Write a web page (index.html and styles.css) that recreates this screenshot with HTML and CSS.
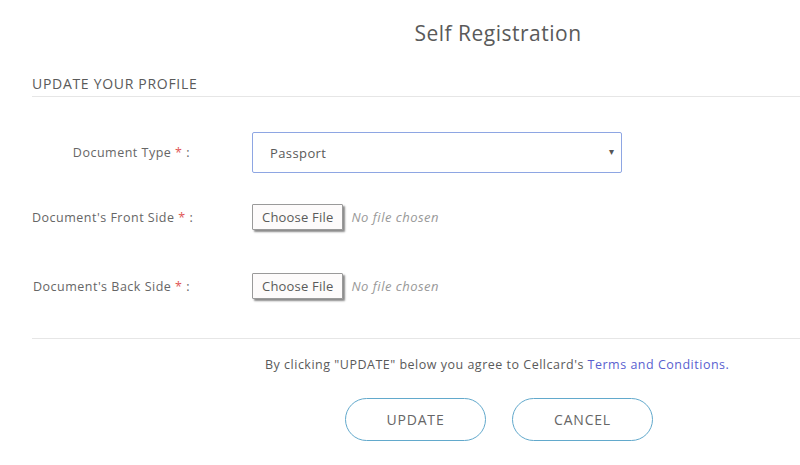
FILE: index.html
```html
<!DOCTYPE html>
<html lang="en">
<head>
<meta charset="utf-8">
<title>Self Registration</title>
<link rel="stylesheet" href="styles.css">
</head>
<body>
<div class="page">
  <h1 class="title">Self Registration</h1>
  <div class="section">
    <h2 class="section-head">UPDATE YOUR PROFILE</h2>
    <form class="form">
      <div class="row row-select">
        <label class="label">Document Type <span class="req">*</span> :</label>
        <div class="select-wrap">
          <select class="select">
            <option>Passport</option>
          </select>
          <span class="arrow">&#9662;</span>
        </div>
      </div>
      <div class="row row-file">
        <label class="label">Document's Front Side <span class="req">*</span> :</label>
        <div class="file">
          <button type="button" class="file-btn">Choose File</button>
          <span class="file-none">No file chosen</span>
        </div>
      </div>
      <div class="row row-file row-file2">
        <label class="label">Document's Back Side <span class="req">*</span> :</label>
        <div class="file">
          <button type="button" class="file-btn">Choose File</button>
          <span class="file-none">No file chosen</span>
        </div>
      </div>
    </form>
    <div class="footer">
      <p class="terms">By clicking "UPDATE" below you agree to Cellcard's <a class="link" href="#">Terms and Conditions.</a></p>
      <div class="actions">
        <button type="button" class="pill">UPDATE</button>
        <button type="button" class="pill">CANCEL</button>
      </div>
    </div>
  </div>
</div>
</body>
</html>
```
FILE: styles.css
```css
* { box-sizing: border-box; }
html, body { margin: 0; padding: 0; background: #fff; }
body {
  font-family: "Open Sans", "Liberation Sans", sans-serif;
  color: #5a5a5a;
  width: 800px;
  height: 465px;
  overflow: hidden;
}
.page { padding-top: 21px; }
.title {
  margin: 0;
  padding-left: 196px;
  text-align: center;
  font-size: 21px;
  line-height: 24px;
  font-weight: 400;
  letter-spacing: 0.5px;
  color: #5a5a5a;
}
.section { padding-left: 32px; margin-top: 31px; }
.section-head {
  margin: 0;
  font-size: 14px;
  line-height: 16px;
  font-weight: 400;
  letter-spacing: 0.7px;
  color: #5a5a5a;
  padding-bottom: 4px;
  border-bottom: 1px solid #e6e6e6;
}
.form { padding-top: 35px; padding-bottom: 39px; border-bottom: 1px solid #e6e6e6; }
.row { display: flex; align-items: center; }
.label {
  width: 158px;
  text-align: right;
  font-size: 12.5px;
  letter-spacing: 0.5px;
  color: #666;
  margin-right: 62px;
  white-space: nowrap;
}
.req { color: #e05555; }
.select-wrap { position: relative; width: 370px; height: 41px; }
.select {
  appearance: none;
  -webkit-appearance: none;
  width: 100%;
  height: 100%;
  border: 1px solid #8ea6e3;
  border-radius: 2px;
  background: #fff;
  padding: 0 17px;
  font-family: inherit;
  font-size: 13px;
  letter-spacing: 0.4px;
  color: #5a5a5a;
  outline: none;
}
.arrow {
  position: absolute;
  right: 8px;
  top: 12px;
  font-size: 10px;
  color: #555;
  pointer-events: none;
}
.row-file { margin-top: 31px; }
.row-file2 { margin-top: 43px; }
.file { display: flex; align-items: center; }
.file-btn {
  height: 26px;
  padding: 0 9px;
  border: 1px solid #9a9a9a;
  border-radius: 1px;
  background: #fdfbfb;
  box-shadow: 2px 2px 2px #8a8a8a;
  font-family: inherit;
  font-size: 13px;
  letter-spacing: 0.2px;
  color: #5a5a5a;
}
.file-none {
  margin-left: 8px;
  font-size: 13px;
  font-style: italic;
  letter-spacing: 0.5px;
  color: #999;
}
.footer { padding-left: 233px; }
.terms {
  margin: 17px 0 0;
  font-size: 12.5px;
  line-height: 18px;
  letter-spacing: 0.5px;
  color: #5a5a5a;
}
.link { color: #5a5fd0; text-decoration: none; }
.actions { display: flex; gap: 26px; margin-top: 24px; padding-left: 80px; }
.pill {
  width: 141px;
  height: 43px;
  border: 1px solid #62a9cc;
  border-radius: 22px;
  background: #fff;
  font-family: inherit;
  font-size: 14px;
  letter-spacing: 0.8px;
  color: #666;
}
```
